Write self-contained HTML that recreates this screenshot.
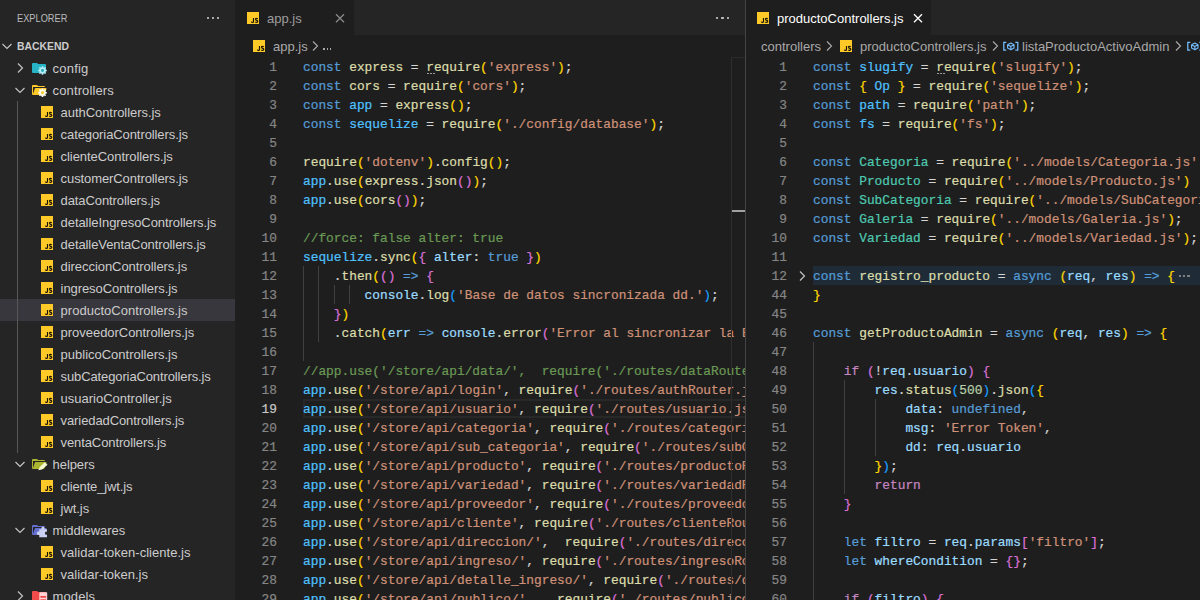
<!DOCTYPE html>
<html><head><meta charset="utf-8"><title>VS Code</title><style>
*{box-sizing:border-box;margin:0;padding:0}
html,body{width:1200px;height:600px;overflow:hidden;background:#1e1e1e}
body{font-family:"Liberation Sans",sans-serif;font-size:13px;color:#cccccc;position:relative}
.abs{position:absolute}
#side{position:absolute;left:0;top:0;width:237px;height:600px;background:#252526;overflow:hidden}
#side .hdr{position:absolute;left:17px;top:11px;font-size:11px;color:#bbbbbb;line-height:14px;transform:scaleX(0.84);transform-origin:0 0}
#side .sec{position:absolute;left:17px;top:39px;font-size:11px;font-weight:bold;color:#cccccc;line-height:14px;transform:scaleX(0.945);transform-origin:0 0}
.dots{position:absolute;width:14px;height:4px}
.dots i{position:absolute;top:-0.2px;width:2.400px;height:2.400px;background:#c5c5c5;border-radius:0.800px}
.row{position:absolute;left:0;width:235px;height:22px}
.row.sel{background:#37373d}
.row .lbl{position:absolute;top:1px;line-height:22px;font-size:13px;color:#cccccc;white-space:nowrap}
.jsi{position:absolute}
.guide{position:absolute;width:1px;background:#585858}
.pane{position:absolute;top:0;height:600px;overflow:hidden;background:#1e1e1e}
.tabs{position:absolute;left:0;top:0;right:0;height:35px;background:#252526}
.tab{position:absolute;left:0;top:0;height:35px;background:#1e1e1e}
.tab .tl{position:absolute;top:1px;line-height:35px;font-size:13px;white-space:nowrap}
.bc{position:absolute;left:0;top:35px;right:0;height:22px;background:#1e1e1e;font-size:13px;color:#a9a9a9}
.bc span{position:absolute;top:1px;line-height:22px;white-space:nowrap}
.code{position:absolute;left:0;top:57px;right:0;bottom:0;font-family:"Liberation Mono",monospace;font-size:12.83px;color:#d4d4d4;-webkit-text-stroke:0.22px}
.ln{position:absolute;left:0;width:42px;text-align:right;line-height:21px;height:19px;color:#858585;white-space:pre}
.ln.cur{color:#c6c6c6}
.cl{position:absolute;left:68px;line-height:21px;height:19px;white-space:pre}
.cl.fold{background:rgba(38,79,120,0.3);width:1000px}
.ck{color:#569cd6}.cc{color:#4fc1ff}.cf{color:#dcdcaa}.cv{color:#9cdcfe}.cs{color:#ce9178}
.ct{color:#4ec9b0}.cm{color:#6a9955}.cp{color:#c586c0}.cn{color:#b5cea8}
.c1{color:#ffd700}.c2{color:#da70d6}.c3{color:#179fff}.cg{color:#808080}
.ig{position:absolute;width:1px;background:#404040}
.ig.act{background:#707070}
</style></head><body>
<div id="side">
<div class="hdr">EXPLORER</div>
<div class="dots" style="left:206.5px;top:17px"><i style="left:0;background:#c5c5c5"></i><i style="left:5.300px;background:#c5c5c5"></i><i style="left:10.600px;background:#c5c5c5"></i></div>
<svg class="abs" style="left:-1px;top:38px" width="16" height="16" viewBox="0 0 16 16"><path d="M3.5 6 L8 10.5 L12.5 6" fill="none" stroke="#c5c5c5" stroke-width="1.15"/></svg>
<div class="sec">BACKEND</div>
<div class="row" style="top:57px">
<svg class="abs" style="left:12px;top:3px" width="16" height="16" viewBox="0 0 16 16"><path d="M6 3.5 L10.5 8 L6 12.5" fill="none" stroke="#c5c5c5" stroke-width="1.15"/></svg>
<svg class="abs" style="left:31px;top:3px;overflow:visible" width="16" height="16" viewBox="0 0 32 32"><path d="M13.844 7.536l-1.288-1.072A2 2 0 0 0 11.276 6H4a2 2 0 0 0-2 2v16a2 2 0 0 0 2 2h24a2 2 0 0 0 2-2V10a2 2 0 0 0-2-2H15.124a2 2 0 0 1-1.280-.464z" fill="#26b4c6"/><path d="M31.64 19.35L31.64 22.65L29.50 22.56L28.70 24.49L30.28 25.95L27.95 28.28L26.49 26.70L24.56 27.50L24.65 29.64L21.35 29.64L21.44 27.50L19.51 26.70L18.05 28.28L15.72 25.95L17.30 24.49L16.50 22.56L14.36 22.65L14.36 19.35L16.50 19.44L17.30 17.51L15.72 16.05L18.05 13.72L19.51 15.30L21.44 14.50L21.35 12.36L24.65 12.36L24.56 14.50L26.49 15.30L27.95 13.72L30.28 16.05L28.70 17.51L29.50 19.44z" fill="#b5ebf5"/><circle cx="23" cy="21" r="2.904" fill="#20a9bb"/></svg>
<span class="lbl" style="left:52.6px;letter-spacing:0.201px">config</span>
</div>
<div class="row" style="top:79px">
<svg class="abs" style="left:12px;top:3px" width="16" height="16" viewBox="0 0 16 16"><path d="M3.5 6 L8 10.5 L12.5 6" fill="none" stroke="#c5c5c5" stroke-width="1.15"/></svg>
<svg class="abs" style="left:31px;top:3px;overflow:visible" width="16" height="16" viewBox="0 0 32 32"><path d="M28.967 12H9.442a2 2 0 0 0-1.898 1.368L4 24V10h24a2 2 0 0 0-2-2H15.124a2 2 0 0 1-1.280-.464l-1.288-1.072A2 2 0 0 0 11.276 6H4a2 2 0 0 0-2 2v16a2 2 0 0 0 2 2h22l4.805-11.212A2 2 0 0 0 28.967 12z" fill="#ffca28"/><path d="M31.64 19.75L31.64 23.05L29.50 22.96L28.70 24.89L30.28 26.35L27.95 28.68L26.49 27.10L24.56 27.90L24.65 30.04L21.35 30.04L21.44 27.90L19.51 27.10L18.05 28.68L15.72 26.35L17.30 24.89L16.50 22.96L14.36 23.05L14.36 19.75L16.50 19.84L17.30 17.91L15.72 16.45L18.05 14.12L19.51 15.70L21.44 14.90L21.35 12.76L24.65 12.76L24.56 14.90L26.49 15.70L27.95 14.12L30.28 16.45L28.70 17.91L29.50 19.84z" fill="#fffdf0"/><circle cx="23" cy="21.4" r="2.904" fill="#ffc61a"/></svg>
<span class="lbl" style="left:52.6px;letter-spacing:0.124px">controllers</span>
</div>
<div class="row" style="top:101px">
<svg class="jsi" style="left:41px;top:5px" width="12" height="12" viewBox="0 0 12 12"><rect width="12" height="12" fill="#ffca28"/><path d="M6.500 6.100V9.400Q6.500 10.400 5.500 10.400Q4.600 10.400 4.300 9.600M10.800 6.900Q10.200 6.400 9.500 6.400Q8.500 6.400 8.500 7.300Q8.500 8.100 9.600 8.400Q10.800 8.700 10.800 9.500Q10.800 10.400 9.600 10.400Q8.700 10.400 8.200 9.800" fill="none" stroke="#1a1500" stroke-width="1.150"/></svg>
<span class="lbl" style="left:60.6px;letter-spacing:-0.056px">authControllers.js</span>
</div>
<div class="row" style="top:123px">
<svg class="jsi" style="left:41px;top:5px" width="12" height="12" viewBox="0 0 12 12"><rect width="12" height="12" fill="#ffca28"/><path d="M6.500 6.100V9.400Q6.500 10.400 5.500 10.400Q4.600 10.400 4.300 9.600M10.800 6.900Q10.200 6.400 9.500 6.400Q8.500 6.400 8.500 7.300Q8.500 8.100 9.600 8.400Q10.800 8.700 10.800 9.500Q10.800 10.400 9.600 10.400Q8.700 10.400 8.200 9.800" fill="none" stroke="#1a1500" stroke-width="1.150"/></svg>
<span class="lbl" style="left:60.6px;letter-spacing:-0.088px">categoriaControllers.js</span>
</div>
<div class="row" style="top:145px">
<svg class="jsi" style="left:41px;top:5px" width="12" height="12" viewBox="0 0 12 12"><rect width="12" height="12" fill="#ffca28"/><path d="M6.500 6.100V9.400Q6.500 10.400 5.500 10.400Q4.600 10.400 4.300 9.600M10.800 6.900Q10.200 6.400 9.500 6.400Q8.500 6.400 8.500 7.300Q8.500 8.100 9.600 8.400Q10.800 8.700 10.800 9.500Q10.800 10.400 9.600 10.400Q8.700 10.400 8.200 9.800" fill="none" stroke="#1a1500" stroke-width="1.150"/></svg>
<span class="lbl" style="left:60.6px;letter-spacing:-0.062px">clienteControllers.js</span>
</div>
<div class="row" style="top:167px">
<svg class="jsi" style="left:41px;top:5px" width="12" height="12" viewBox="0 0 12 12"><rect width="12" height="12" fill="#ffca28"/><path d="M6.500 6.100V9.400Q6.500 10.400 5.500 10.400Q4.600 10.400 4.300 9.600M10.800 6.900Q10.200 6.400 9.500 6.400Q8.500 6.400 8.500 7.300Q8.500 8.100 9.600 8.400Q10.800 8.700 10.800 9.500Q10.800 10.400 9.600 10.400Q8.700 10.400 8.200 9.800" fill="none" stroke="#1a1500" stroke-width="1.150"/></svg>
<span class="lbl" style="left:60.6px;letter-spacing:-0.092px">customerControllers.js</span>
</div>
<div class="row" style="top:189px">
<svg class="jsi" style="left:41px;top:5px" width="12" height="12" viewBox="0 0 12 12"><rect width="12" height="12" fill="#ffca28"/><path d="M6.500 6.100V9.400Q6.500 10.400 5.500 10.400Q4.600 10.400 4.300 9.600M10.800 6.900Q10.200 6.400 9.500 6.400Q8.500 6.400 8.500 7.300Q8.500 8.100 9.600 8.400Q10.800 8.700 10.800 9.500Q10.800 10.400 9.600 10.400Q8.700 10.400 8.200 9.800" fill="none" stroke="#1a1500" stroke-width="1.150"/></svg>
<span class="lbl" style="left:60.6px;letter-spacing:-0.103px">dataControllers.js</span>
</div>
<div class="row" style="top:211px">
<svg class="jsi" style="left:41px;top:5px" width="12" height="12" viewBox="0 0 12 12"><rect width="12" height="12" fill="#ffca28"/><path d="M6.500 6.100V9.400Q6.500 10.400 5.500 10.400Q4.600 10.400 4.300 9.600M10.800 6.900Q10.200 6.400 9.500 6.400Q8.500 6.400 8.500 7.300Q8.500 8.100 9.600 8.400Q10.800 8.700 10.800 9.500Q10.800 10.400 9.600 10.400Q8.700 10.400 8.200 9.800" fill="none" stroke="#1a1500" stroke-width="1.150"/></svg>
<span class="lbl" style="left:60.6px;letter-spacing:-0.068px">detalleIngresoControllers.js</span>
</div>
<div class="row" style="top:233px">
<svg class="jsi" style="left:41px;top:5px" width="12" height="12" viewBox="0 0 12 12"><rect width="12" height="12" fill="#ffca28"/><path d="M6.500 6.100V9.400Q6.500 10.400 5.500 10.400Q4.600 10.400 4.300 9.600M10.800 6.900Q10.200 6.400 9.500 6.400Q8.500 6.400 8.500 7.300Q8.500 8.100 9.600 8.400Q10.800 8.700 10.800 9.500Q10.800 10.400 9.600 10.400Q8.700 10.400 8.200 9.800" fill="none" stroke="#1a1500" stroke-width="1.150"/></svg>
<span class="lbl" style="left:60.6px;letter-spacing:-0.089px">detalleVentaControllers.js</span>
</div>
<div class="row" style="top:255px">
<svg class="jsi" style="left:41px;top:5px" width="12" height="12" viewBox="0 0 12 12"><rect width="12" height="12" fill="#ffca28"/><path d="M6.500 6.100V9.400Q6.500 10.400 5.500 10.400Q4.600 10.400 4.300 9.600M10.800 6.900Q10.200 6.400 9.500 6.400Q8.500 6.400 8.500 7.300Q8.500 8.100 9.600 8.400Q10.800 8.700 10.800 9.500Q10.800 10.400 9.600 10.400Q8.700 10.400 8.200 9.800" fill="none" stroke="#1a1500" stroke-width="1.150"/></svg>
<span class="lbl" style="left:60.6px;letter-spacing:-0.058px">direccionControllers.js</span>
</div>
<div class="row" style="top:277px">
<svg class="jsi" style="left:41px;top:5px" width="12" height="12" viewBox="0 0 12 12"><rect width="12" height="12" fill="#ffca28"/><path d="M6.500 6.100V9.400Q6.500 10.400 5.500 10.400Q4.600 10.400 4.300 9.600M10.800 6.900Q10.200 6.400 9.500 6.400Q8.500 6.400 8.500 7.300Q8.500 8.100 9.600 8.400Q10.800 8.700 10.800 9.500Q10.800 10.400 9.600 10.400Q8.700 10.400 8.200 9.800" fill="none" stroke="#1a1500" stroke-width="1.150"/></svg>
<span class="lbl" style="left:60.6px;letter-spacing:-0.08px">ingresoControllers.js</span>
</div>
<div class="row sel" style="top:299px">
<svg class="jsi" style="left:41px;top:5px" width="12" height="12" viewBox="0 0 12 12"><rect width="12" height="12" fill="#ffca28"/><path d="M6.500 6.100V9.400Q6.500 10.400 5.500 10.400Q4.600 10.400 4.300 9.600M10.800 6.900Q10.200 6.400 9.500 6.400Q8.500 6.400 8.500 7.300Q8.500 8.100 9.600 8.400Q10.800 8.700 10.800 9.500Q10.800 10.400 9.600 10.400Q8.700 10.400 8.200 9.800" fill="none" stroke="#1a1500" stroke-width="1.150"/></svg>
<span class="lbl" style="left:60.6px;letter-spacing:0.022px">productoControllers.js</span>
</div>
<div class="row" style="top:321px">
<svg class="jsi" style="left:41px;top:5px" width="12" height="12" viewBox="0 0 12 12"><rect width="12" height="12" fill="#ffca28"/><path d="M6.500 6.100V9.400Q6.500 10.400 5.500 10.400Q4.600 10.400 4.300 9.600M10.800 6.900Q10.200 6.400 9.500 6.400Q8.500 6.400 8.500 7.300Q8.500 8.100 9.600 8.400Q10.800 8.700 10.800 9.500Q10.800 10.400 9.600 10.400Q8.700 10.400 8.200 9.800" fill="none" stroke="#1a1500" stroke-width="1.150"/></svg>
<span class="lbl" style="left:60.6px;letter-spacing:-0.036px">proveedorControllers.js</span>
</div>
<div class="row" style="top:343px">
<svg class="jsi" style="left:41px;top:5px" width="12" height="12" viewBox="0 0 12 12"><rect width="12" height="12" fill="#ffca28"/><path d="M6.500 6.100V9.400Q6.500 10.400 5.500 10.400Q4.600 10.400 4.300 9.600M10.800 6.900Q10.200 6.400 9.500 6.400Q8.500 6.400 8.500 7.300Q8.500 8.100 9.600 8.400Q10.800 8.700 10.800 9.500Q10.800 10.400 9.600 10.400Q8.700 10.400 8.200 9.800" fill="none" stroke="#1a1500" stroke-width="1.150"/></svg>
<span class="lbl" style="left:60.6px;letter-spacing:-0.008px">publicoControllers.js</span>
</div>
<div class="row" style="top:365px">
<svg class="jsi" style="left:41px;top:5px" width="12" height="12" viewBox="0 0 12 12"><rect width="12" height="12" fill="#ffca28"/><path d="M6.500 6.100V9.400Q6.500 10.400 5.500 10.400Q4.600 10.400 4.300 9.600M10.800 6.900Q10.200 6.400 9.500 6.400Q8.500 6.400 8.500 7.300Q8.500 8.100 9.600 8.400Q10.800 8.700 10.800 9.500Q10.800 10.400 9.600 10.400Q8.700 10.400 8.200 9.800" fill="none" stroke="#1a1500" stroke-width="1.150"/></svg>
<span class="lbl" style="left:60.6px;letter-spacing:-0.119px">subCategoriaControllers.js</span>
</div>
<div class="row" style="top:387px">
<svg class="jsi" style="left:41px;top:5px" width="12" height="12" viewBox="0 0 12 12"><rect width="12" height="12" fill="#ffca28"/><path d="M6.500 6.100V9.400Q6.500 10.400 5.500 10.400Q4.600 10.400 4.300 9.600M10.800 6.900Q10.200 6.400 9.500 6.400Q8.500 6.400 8.500 7.300Q8.500 8.100 9.600 8.400Q10.800 8.700 10.800 9.500Q10.800 10.400 9.600 10.400Q8.700 10.400 8.200 9.800" fill="none" stroke="#1a1500" stroke-width="1.150"/></svg>
<span class="lbl" style="left:60.6px;letter-spacing:-0.009px">usuarioController.js</span>
</div>
<div class="row" style="top:409px">
<svg class="jsi" style="left:41px;top:5px" width="12" height="12" viewBox="0 0 12 12"><rect width="12" height="12" fill="#ffca28"/><path d="M6.500 6.100V9.400Q6.500 10.400 5.500 10.400Q4.600 10.400 4.300 9.600M10.800 6.900Q10.200 6.400 9.500 6.400Q8.500 6.400 8.500 7.300Q8.500 8.100 9.600 8.400Q10.800 8.700 10.800 9.500Q10.800 10.400 9.600 10.400Q8.700 10.400 8.200 9.800" fill="none" stroke="#1a1500" stroke-width="1.150"/></svg>
<span class="lbl" style="left:60.6px;letter-spacing:-0.101px">variedadControllers.js</span>
</div>
<div class="row" style="top:431px">
<svg class="jsi" style="left:41px;top:5px" width="12" height="12" viewBox="0 0 12 12"><rect width="12" height="12" fill="#ffca28"/><path d="M6.500 6.100V9.400Q6.500 10.400 5.500 10.400Q4.600 10.400 4.300 9.600M10.800 6.900Q10.200 6.400 9.500 6.400Q8.500 6.400 8.500 7.300Q8.500 8.100 9.600 8.400Q10.800 8.700 10.800 9.500Q10.800 10.400 9.600 10.400Q8.700 10.400 8.200 9.800" fill="none" stroke="#1a1500" stroke-width="1.150"/></svg>
<span class="lbl" style="left:60.6px;letter-spacing:-0.108px">ventaControllers.js</span>
</div>
<div class="row" style="top:453px">
<svg class="abs" style="left:12px;top:3px" width="16" height="16" viewBox="0 0 16 16"><path d="M3.5 6 L8 10.5 L12.5 6" fill="none" stroke="#c5c5c5" stroke-width="1.15"/></svg>
<svg class="abs" style="left:31px;top:3px;overflow:visible" width="16" height="16" viewBox="0 0 32 32"><path d="M28.967 12H9.442a2 2 0 0 0-1.898 1.368L4 24V10h24a2 2 0 0 0-2-2H15.124a2 2 0 0 1-1.280-.464l-1.288-1.072A2 2 0 0 0 11.276 6H4a2 2 0 0 0-2 2v16a2 2 0 0 0 2 2h22l4.805-11.212A2 2 0 0 0 28.967 12z" fill="#aab530"/><path d="M14.500 28.500L17.500 22L27.500 12.500L33 17.500L22 27z" fill="#f4f8d0"/></svg>
<span class="lbl" style="left:52.6px;letter-spacing:-0.089px">helpers</span>
</div>
<div class="row" style="top:475px">
<svg class="jsi" style="left:41px;top:5px" width="12" height="12" viewBox="0 0 12 12"><rect width="12" height="12" fill="#ffca28"/><path d="M6.500 6.100V9.400Q6.500 10.400 5.500 10.400Q4.600 10.400 4.300 9.600M10.800 6.900Q10.200 6.400 9.500 6.400Q8.500 6.400 8.500 7.300Q8.500 8.100 9.600 8.400Q10.800 8.700 10.800 9.500Q10.800 10.400 9.600 10.400Q8.700 10.400 8.200 9.800" fill="none" stroke="#1a1500" stroke-width="1.150"/></svg>
<span class="lbl" style="left:60.6px;letter-spacing:-0.138px">cliente_jwt.js</span>
</div>
<div class="row" style="top:497px">
<svg class="jsi" style="left:41px;top:5px" width="12" height="12" viewBox="0 0 12 12"><rect width="12" height="12" fill="#ffca28"/><path d="M6.500 6.100V9.400Q6.500 10.400 5.500 10.400Q4.600 10.400 4.300 9.600M10.800 6.900Q10.200 6.400 9.500 6.400Q8.500 6.400 8.500 7.300Q8.500 8.100 9.600 8.400Q10.800 8.700 10.800 9.500Q10.800 10.400 9.600 10.400Q8.700 10.400 8.200 9.800" fill="none" stroke="#1a1500" stroke-width="1.150"/></svg>
<span class="lbl" style="left:60.6px;letter-spacing:-0.057px">jwt.js</span>
</div>
<div class="row" style="top:519px">
<svg class="abs" style="left:12px;top:3px" width="16" height="16" viewBox="0 0 16 16"><path d="M3.5 6 L8 10.5 L12.5 6" fill="none" stroke="#c5c5c5" stroke-width="1.15"/></svg>
<svg class="abs" style="left:31px;top:3px;overflow:visible" width="16" height="16" viewBox="0 0 32 32"><path d="M28.967 12H9.442a2 2 0 0 0-1.898 1.368L4 24V10h24a2 2 0 0 0-2-2H15.124a2 2 0 0 1-1.280-.464l-1.288-1.072A2 2 0 0 0 11.276 6H4a2 2 0 0 0-2 2v16a2 2 0 0 0 2 2h22l4.805-11.212A2 2 0 0 0 28.967 12z" fill="#6470cf"/><path d="M16.500 14.500h4.700a3.300 3.300 0 1 1 5.600 0h5.200v5a3 3 0 1 0 0 5.600v5.400H16.500v-5.200a3.300 3.300 0 1 1 0-5.600z" fill="#ccd0f0"/></svg>
<span class="lbl" style="left:52.6px;letter-spacing:-0.028px">middlewares</span>
</div>
<div class="row" style="top:541px">
<svg class="jsi" style="left:41px;top:5px" width="12" height="12" viewBox="0 0 12 12"><rect width="12" height="12" fill="#ffca28"/><path d="M6.500 6.100V9.400Q6.500 10.400 5.500 10.400Q4.600 10.400 4.300 9.600M10.800 6.900Q10.200 6.400 9.500 6.400Q8.500 6.400 8.500 7.300Q8.500 8.100 9.600 8.400Q10.800 8.700 10.800 9.500Q10.800 10.400 9.600 10.400Q8.700 10.400 8.200 9.800" fill="none" stroke="#1a1500" stroke-width="1.150"/></svg>
<span class="lbl" style="left:60.6px;letter-spacing:0.024px">validar-token-cliente.js</span>
</div>
<div class="row" style="top:563px">
<svg class="jsi" style="left:41px;top:5px" width="12" height="12" viewBox="0 0 12 12"><rect width="12" height="12" fill="#ffca28"/><path d="M6.500 6.100V9.400Q6.500 10.400 5.500 10.400Q4.600 10.400 4.300 9.600M10.800 6.900Q10.200 6.400 9.500 6.400Q8.500 6.400 8.500 7.300Q8.500 8.100 9.600 8.400Q10.800 8.700 10.800 9.500Q10.800 10.400 9.600 10.400Q8.700 10.400 8.200 9.800" fill="none" stroke="#1a1500" stroke-width="1.150"/></svg>
<span class="lbl" style="left:60.6px;letter-spacing:-0.002px">validar-token.js</span>
</div>
<div class="row" style="top:585px">
<svg class="abs" style="left:12px;top:3px" width="16" height="16" viewBox="0 0 16 16"><path d="M6 3.5 L10.5 8 L6 12.5" fill="none" stroke="#c5c5c5" stroke-width="1.15"/></svg>
<svg class="abs" style="left:31px;top:3px;overflow:visible" width="16" height="16" viewBox="0 0 32 32"><path d="M13.844 7.536l-1.288-1.072A2 2 0 0 0 11.276 6H4a2 2 0 0 0-2 2v16a2 2 0 0 0 2 2h24a2 2 0 0 0 2-2V10a2 2 0 0 0-2-2H15.124a2 2 0 0 1-1.280-.464z" fill="#f24c4a"/><rect x="16.600" y="8.600" width="15.800" height="22" rx="1.500" fill="#ffd3d6"/><rect x="18.800" y="16" width="11.400" height="3.400" fill="#ef4444"/><rect x="18.800" y="22.600" width="11.400" height="3.400" fill="#ef4444"/></svg>
<span class="lbl" style="left:52.6px;letter-spacing:0.097px">models</span>
</div>
<div class="guide" style="left:17px;top:101px;height:352px"></div>
</div>
<div class="pane" id="p1" style="left:235px;width:510px">
<div class="tabs"><div class="tab" style="width:119px">
<svg class="jsi" style="left:12px;top:12px" width="12" height="12" viewBox="0 0 12 12"><rect width="12" height="12" fill="#ffca28"/><path d="M6.500 6.100V9.400Q6.500 10.400 5.500 10.400Q4.600 10.400 4.300 9.600M10.800 6.900Q10.200 6.400 9.500 6.400Q8.500 6.400 8.500 7.300Q8.500 8.100 9.600 8.400Q10.800 8.700 10.800 9.500Q10.800 10.400 9.600 10.400Q8.700 10.400 8.200 9.800" fill="none" stroke="#1a1500" stroke-width="1.150"/></svg>
<span class="tl" style="left:32px;color:#9d9d9d">app.js</span>
<svg class="abs" style="left:97px;top:10px" width="16" height="16" viewBox="0 0 16 16"><path d="M4 4.300l8 8M12 4.300l-8 8" stroke="#8a8a8a" stroke-width="1.300" fill="none"/></svg>
</div>
<div class="dots" style="left:481px;top:17px"><i style="left:0;background:#c5c5c5"></i><i style="left:5.300px;background:#c5c5c5"></i><i style="left:10.600px;background:#c5c5c5"></i></div>
</div>
<div class="bc">
<svg class="jsi" style="left:18px;top:5px" width="12" height="12" viewBox="0 0 12 12"><rect width="12" height="12" fill="#ffca28"/><path d="M6.500 6.100V9.400Q6.500 10.400 5.500 10.400Q4.600 10.400 4.300 9.600M10.800 6.900Q10.200 6.400 9.500 6.400Q8.500 6.400 8.500 7.300Q8.500 8.100 9.600 8.400Q10.800 8.700 10.800 9.500Q10.800 10.400 9.600 10.400Q8.700 10.400 8.200 9.800" fill="none" stroke="#1a1500" stroke-width="1.150"/></svg>
<span style="left:38px">app.js</span>
<svg class="abs" style="left:72px;top:3px" width="16" height="16" viewBox="0 0 16 16"><path d="M6 3.5 L10.5 8 L6 12.5" fill="none" stroke="#a9a9a9" stroke-width="1.15"/></svg>
<div class="abs" style="left:88.2px;top:13.400px;width:1.700px;height:1.700px;background:#a9a9a9"></div>
<div class="abs" style="left:91.5px;top:13.400px;width:1.700px;height:1.700px;background:#a9a9a9"></div>
<div class="abs" style="left:94.8px;top:13.400px;width:1.700px;height:1.700px;background:#a9a9a9"></div>
</div>
<div class="code">
<div class="abs" style="left:68px;top:342px;width:442px;height:19px;border:2px solid #282828;border-right:0"></div>
<div class="ig" style="left:68px;top:209px;height:95px"></div>
<div class="ig" style="left:83px;top:209px;height:76px"></div>
<div class="ig" style="left:99px;top:228px;height:19px"></div>
<div class="ig" style="left:114px;top:228px;height:19px"></div>
<div class="ln" style="top:0px">1</div>
<div class="cl" style="top:0px"><span class="ck">const</span> <span class="cf">express</span> = <span class="cf">require</span><span class="c1">(</span><span class="cs">'express'</span><span class="c1">)</span>;</div>
<div class="ln" style="top:19px">2</div>
<div class="cl" style="top:19px"><span class="ck">const</span> <span class="cf">cors</span> = <span class="cf">require</span><span class="c1">(</span><span class="cs">'cors'</span><span class="c1">)</span>;</div>
<div class="ln" style="top:38px">3</div>
<div class="cl" style="top:38px"><span class="ck">const</span> <span class="cc">app</span> = <span class="cf">express</span><span class="c1">()</span>;</div>
<div class="ln" style="top:57px">4</div>
<div class="cl" style="top:57px"><span class="ck">const</span> <span class="cc">sequelize</span> = <span class="cf">require</span><span class="c1">(</span><span class="cs">'./config/database'</span><span class="c1">)</span>;</div>
<div class="ln" style="top:76px">5</div>
<div class="cl" style="top:76px"></div>
<div class="ln" style="top:95px">6</div>
<div class="cl" style="top:95px"><span class="cf">require</span><span class="c1">(</span><span class="cs">'dotenv'</span><span class="c1">)</span>.<span class="cf">config</span><span class="c1">()</span>;</div>
<div class="ln" style="top:114px">7</div>
<div class="cl" style="top:114px"><span class="cc">app</span>.<span class="cf">use</span><span class="c1">(</span><span class="cf">express</span>.<span class="cf">json</span><span class="c2">()</span><span class="c1">)</span>;</div>
<div class="ln" style="top:133px">8</div>
<div class="cl" style="top:133px"><span class="cc">app</span>.<span class="cf">use</span><span class="c1">(</span><span class="cf">cors</span><span class="c2">()</span><span class="c1">)</span>;</div>
<div class="ln" style="top:152px">9</div>
<div class="cl" style="top:152px"></div>
<div class="ln" style="top:171px">10</div>
<div class="cl" style="top:171px"><span class="cm">//force: false alter: true</span></div>
<div class="ln" style="top:190px">11</div>
<div class="cl" style="top:190px"><span class="cc">sequelize</span>.<span class="cf">sync</span><span class="c1">(</span><span class="c2">{</span> <span class="cv">alter</span>: <span class="ck">true</span> <span class="c2">}</span><span class="c1">)</span></div>
<div class="ln" style="top:209px">12</div>
<div class="cl" style="top:209px">    .<span class="cf">then</span><span class="c1">(</span><span class="c2">()</span> <span class="ck">=&gt;</span> <span class="c2">{</span></div>
<div class="ln" style="top:228px">13</div>
<div class="cl" style="top:228px">        <span class="cv">console</span>.<span class="cf">log</span><span class="c3">(</span><span class="cs">'Base de datos sincronizada dd.'</span><span class="c3">)</span>;</div>
<div class="ln" style="top:247px">14</div>
<div class="cl" style="top:247px">    <span class="c2">}</span><span class="c1">)</span></div>
<div class="ln" style="top:266px">15</div>
<div class="cl" style="top:266px">    .<span class="cf">catch</span><span class="c1">(</span><span class="cv">err</span> <span class="ck">=&gt;</span> <span class="cv">console</span>.<span class="cf">error</span><span class="c2">(</span><span class="cs">'Error al sincronizar la Base de datos:'</span>,</div>
<div class="ln" style="top:285px">16</div>
<div class="cl" style="top:285px"></div>
<div class="ln" style="top:304px">17</div>
<div class="cl" style="top:304px"><span class="cm">//app.use('/store/api/data/',  require('./routes/dataRouter.js'));</span></div>
<div class="ln" style="top:323px">18</div>
<div class="cl" style="top:323px"><span class="cc">app</span>.<span class="cf">use</span><span class="c1">(</span><span class="cs">'/store/api/login'</span>, <span class="cf">require</span><span class="c2">(</span><span class="cs">'./routes/authRouter.js'</span><span class="c2">)</span><span class="c1">)</span>;</div>
<div class="ln cur" style="top:342px">19</div>
<div class="cl" style="top:342px"><span class="cc">app</span>.<span class="cf">use</span><span class="c1">(</span><span class="cs">'/store/api/usuario'</span>, <span class="cf">require</span><span class="c2">(</span><span class="cs">'./routes/usuario.js'</span><span class="c2">)</span><span class="c1">)</span>;</div>
<div class="ln" style="top:361px">20</div>
<div class="cl" style="top:361px"><span class="cc">app</span>.<span class="cf">use</span><span class="c1">(</span><span class="cs">'/store/api/categoria'</span>, <span class="cf">require</span><span class="c2">(</span><span class="cs">'./routes/categoria.js'</span><span class="c2">)</span><span class="c1">)</span>;</div>
<div class="ln" style="top:380px">21</div>
<div class="cl" style="top:380px"><span class="cc">app</span>.<span class="cf">use</span><span class="c1">(</span><span class="cs">'/store/api/sub_categoria'</span>, <span class="cf">require</span><span class="c2">(</span><span class="cs">'./routes/subCategoria.js'</span><span class="c2">)</span><span class="c1">)</span>;</div>
<div class="ln" style="top:399px">22</div>
<div class="cl" style="top:399px"><span class="cc">app</span>.<span class="cf">use</span><span class="c1">(</span><span class="cs">'/store/api/producto'</span>, <span class="cf">require</span><span class="c2">(</span><span class="cs">'./routes/productoRouter.js'</span><span class="c2">)</span><span class="c1">)</span>;</div>
<div class="ln" style="top:418px">23</div>
<div class="cl" style="top:418px"><span class="cc">app</span>.<span class="cf">use</span><span class="c1">(</span><span class="cs">'/store/api/variedad'</span>, <span class="cf">require</span><span class="c2">(</span><span class="cs">'./routes/variedadRouter.js'</span><span class="c2">)</span><span class="c1">)</span>;</div>
<div class="ln" style="top:437px">24</div>
<div class="cl" style="top:437px"><span class="cc">app</span>.<span class="cf">use</span><span class="c1">(</span><span class="cs">'/store/api/proveedor'</span>, <span class="cf">require</span><span class="c2">(</span><span class="cs">'./routes/proveedorRouter.js'</span><span class="c2">)</span><span class="c1">)</span>;</div>
<div class="ln" style="top:456px">25</div>
<div class="cl" style="top:456px"><span class="cc">app</span>.<span class="cf">use</span><span class="c1">(</span><span class="cs">'/store/api/cliente'</span>, <span class="cf">require</span><span class="c2">(</span><span class="cs">'./routes/clienteRouter.js'</span><span class="c2">)</span><span class="c1">)</span>;</div>
<div class="ln" style="top:475px">26</div>
<div class="cl" style="top:475px"><span class="cc">app</span>.<span class="cf">use</span><span class="c1">(</span><span class="cs">'/store/api/direccion/'</span>,  <span class="cf">require</span><span class="c2">(</span><span class="cs">'./routes/direccionRouter.js'</span><span class="c2">)</span><span class="c1">)</span>;</div>
<div class="ln" style="top:494px">27</div>
<div class="cl" style="top:494px"><span class="cc">app</span>.<span class="cf">use</span><span class="c1">(</span><span class="cs">'/store/api/ingreso/'</span>, <span class="cf">require</span><span class="c2">(</span><span class="cs">'./routes/ingresoRouter.js'</span><span class="c2">)</span><span class="c1">)</span>;</div>
<div class="ln" style="top:513px">28</div>
<div class="cl" style="top:513px"><span class="cc">app</span>.<span class="cf">use</span><span class="c1">(</span><span class="cs">'/store/api/detalle_ingreso/'</span>, <span class="cf">require</span><span class="c2">(</span><span class="cs">'./routes/detalleIngreso.js'</span><span class="c2">)</span><span class="c1">)</span>;</div>
<div class="ln" style="top:532px">29</div>
<div class="cl" style="top:532px"><span class="cc">app</span>.<span class="cf">use</span><span class="c1">(</span><span class="cs">'/store/api/publico/'</span>,   <span class="cf">require</span><span class="c2">(</span><span class="cs">'./routes/publicoRouter.js'</span><span class="c2">)</span><span class="c1">)</span>;</div>
<div class="abs" style="left:192px;top:16px;width:1.500px;height:1.400px;background:#999999"></div>
<div class="abs" style="left:195px;top:16px;width:1.500px;height:1.400px;background:#999999"></div>
<div class="abs" style="left:198px;top:16px;width:1.500px;height:1.400px;background:#999999"></div>
</div>
<div class="abs" style="left:496px;top:57px;width:14px;height:543px;border-left:1px solid #2e2e2e;border-top:1px solid #2a2a2a"></div>
<div class="abs" style="left:497px;top:210px;width:13px;height:2px;background:#a0a0a0"></div>
</div>
<div class="pane" id="p2" style="left:745px;width:455px;border-left:1px solid #444444">
<div class="tabs"><div class="tab" style="width:185px">
<svg class="jsi" style="left:11px;top:12px" width="12" height="12" viewBox="0 0 12 12"><rect width="12" height="12" fill="#ffca28"/><path d="M6.500 6.100V9.400Q6.500 10.400 5.500 10.400Q4.600 10.400 4.300 9.600M10.800 6.900Q10.200 6.400 9.500 6.400Q8.500 6.400 8.500 7.300Q8.500 8.100 9.600 8.400Q10.800 8.700 10.800 9.500Q10.800 10.400 9.600 10.400Q8.700 10.400 8.200 9.800" fill="none" stroke="#1a1500" stroke-width="1.150"/></svg>
<span class="tl" style="left:31px;color:#ffffff">productoControllers.js</span>
<svg class="abs" style="left:164px;top:10px" width="16" height="16" viewBox="0 0 16 16"><path d="M4 4.300l8 8M12 4.300l-8 8" stroke="#ffffff" stroke-width="1.300" fill="none"/></svg>
</div></div>
<div class="bc">
<span style="left:15px">controllers</span>
<svg class="abs" style="left:75px;top:3px" width="16" height="16" viewBox="0 0 16 16"><path d="M6 3.5 L10.5 8 L6 12.5" fill="none" stroke="#a9a9a9" stroke-width="1.15"/></svg>
<svg class="jsi" style="left:94px;top:5px" width="12" height="12" viewBox="0 0 12 12"><rect width="12" height="12" fill="#ffca28"/><path d="M6.500 6.100V9.400Q6.500 10.400 5.500 10.400Q4.600 10.400 4.300 9.600M10.800 6.900Q10.200 6.400 9.500 6.400Q8.500 6.400 8.500 7.300Q8.500 8.100 9.600 8.400Q10.800 8.700 10.800 9.500Q10.800 10.400 9.600 10.400Q8.700 10.400 8.200 9.800" fill="none" stroke="#1a1500" stroke-width="1.150"/></svg>
<span style="left:114px">productoControllers.js</span>
<svg class="abs" style="left:241px;top:3px" width="16" height="16" viewBox="0 0 16 16"><path d="M6 3.5 L10.5 8 L6 12.5" fill="none" stroke="#a9a9a9" stroke-width="1.15"/></svg>
<svg class="abs" style="left:256px;top:3px" width="18" height="16" viewBox="0 0 18 16"><path d="M4.300 4.400H1.800V12.200H4.300M13.300 4.400H15.800V12.200H13.300" stroke="#75beff" stroke-width="1.250" fill="none"/><path d="M8.800 5L12 6.700V10L8.800 11.700L5.600 10V6.700zM5.600 6.700L8.800 8.400L12 6.700M8.800 8.400V11.700" stroke="#75beff" stroke-width="1.100" fill="none" stroke-linejoin="round"/></svg>
<span style="left:276px">listaProductoActivoAdmin</span>
<svg class="abs" style="left:424px;top:3px" width="16" height="16" viewBox="0 0 16 16"><path d="M6 3.5 L10.5 8 L6 12.5" fill="none" stroke="#a9a9a9" stroke-width="1.15"/></svg>
<svg class="abs" style="left:439.5px;top:3px" width="18" height="16" viewBox="0 0 18 16"><path d="M4.300 4.400H1.800V12.200H4.300M13.300 4.400H15.800V12.200H13.300" stroke="#75beff" stroke-width="1.250" fill="none"/><path d="M8.800 5L12 6.700V10L8.800 11.700L5.600 10V6.700zM5.600 6.700L8.800 8.400L12 6.700M8.800 8.400V11.700" stroke="#75beff" stroke-width="1.100" fill="none" stroke-linejoin="round"/></svg>
</div>
<div class="code" style="left:-1px">
<div class="ig" style="left:68px;top:285px;height:300px"></div>
<div class="ig" style="left:99px;top:323px;height:114px"></div>
<div class="ig" style="left:130px;top:342px;height:57px"></div>
<div class="ln" style="top:0px">1</div>
<div class="cl" style="top:0px"><span class="ck">const</span> <span class="cc">slugify</span> = <span class="cf">require</span><span class="c1">(</span><span class="cs">'slugify'</span><span class="c1">)</span>;</div>
<div class="ln" style="top:19px">2</div>
<div class="cl" style="top:19px"><span class="ck">const</span> <span class="c1">{</span> <span class="cc">Op</span> <span class="c1">}</span> = <span class="cf">require</span><span class="c1">(</span><span class="cs">'sequelize'</span><span class="c1">)</span>;</div>
<div class="ln" style="top:38px">3</div>
<div class="cl" style="top:38px"><span class="ck">const</span> <span class="cc">path</span> = <span class="cf">require</span><span class="c1">(</span><span class="cs">'path'</span><span class="c1">)</span>;</div>
<div class="ln" style="top:57px">4</div>
<div class="cl" style="top:57px"><span class="ck">const</span> <span class="cc">fs</span> = <span class="cf">require</span><span class="c1">(</span><span class="cs">'fs'</span><span class="c1">)</span>;</div>
<div class="ln" style="top:76px">5</div>
<div class="cl" style="top:76px"></div>
<div class="ln" style="top:95px">6</div>
<div class="cl" style="top:95px"><span class="ck">const</span> <span class="ct">Categoria</span> = <span class="cf">require</span><span class="c1">(</span><span class="cs">'../models/Categoria.js'</span><span class="c1">)</span>;</div>
<div class="ln" style="top:114px">7</div>
<div class="cl" style="top:114px"><span class="ck">const</span> <span class="ct">Producto</span> = <span class="cf">require</span><span class="c1">(</span><span class="cs">'../models/Producto.js'</span><span class="c1">)</span></div>
<div class="ln" style="top:133px">8</div>
<div class="cl" style="top:133px"><span class="ck">const</span> <span class="ct">SubCategoria</span> = <span class="cf">require</span><span class="c1">(</span><span class="cs">'../models/SubCategoria.js'</span><span class="c1">)</span>;</div>
<div class="ln" style="top:152px">9</div>
<div class="cl" style="top:152px"><span class="ck">const</span> <span class="ct">Galeria</span> = <span class="cf">require</span><span class="c1">(</span><span class="cs">'../models/Galeria.js'</span><span class="c1">)</span>;</div>
<div class="ln" style="top:171px">10</div>
<div class="cl" style="top:171px"><span class="ck">const</span> <span class="ct">Variedad</span> = <span class="cf">require</span><span class="c1">(</span><span class="cs">'../models/Variedad.js'</span><span class="c1">)</span>;</div>
<div class="ln" style="top:190px">11</div>
<div class="cl" style="top:190px"></div>
<div class="ln" style="top:209px">12</div>
<div class="cl fold" style="top:209px"><span class="ck">const</span> <span class="cf">registro_producto</span> = <span class="ck">async</span> <span class="c1">(</span><span class="cv">req</span>, <span class="cv">res</span><span class="c1">)</span> <span class="ck">=&gt;</span> <span class="c1">{</span></div>
<div class="ln" style="top:228px">44</div>
<div class="cl" style="top:228px"><span class="c1">}</span></div>
<div class="ln" style="top:247px">45</div>
<div class="cl" style="top:247px"></div>
<div class="ln" style="top:266px">46</div>
<div class="cl" style="top:266px"><span class="ck">const</span> <span class="cf">getProductoAdmin</span> = <span class="ck">async</span> <span class="c1">(</span><span class="cv">req</span>, <span class="cv">res</span><span class="c1">)</span> <span class="ck">=&gt;</span> <span class="c1">{</span></div>
<div class="ln" style="top:285px">47</div>
<div class="cl" style="top:285px"></div>
<div class="ln" style="top:304px">48</div>
<div class="cl" style="top:304px">    <span class="cp">if</span> <span class="c2">(</span>!<span class="cv">req</span>.<span class="cv">usuario</span><span class="c2">)</span> <span class="c2">{</span></div>
<div class="ln" style="top:323px">49</div>
<div class="cl" style="top:323px">        <span class="cv">res</span>.<span class="cf">status</span><span class="c3">(</span><span class="cn">500</span><span class="c3">)</span>.<span class="cf">json</span><span class="c3">(</span><span class="c1">{</span></div>
<div class="ln" style="top:342px">50</div>
<div class="cl" style="top:342px">            <span class="cv">data</span>: <span class="ck">undefined</span>,</div>
<div class="ln" style="top:361px">51</div>
<div class="cl" style="top:361px">            <span class="cv">msg</span>: <span class="cs">'Error Token'</span>,</div>
<div class="ln" style="top:380px">52</div>
<div class="cl" style="top:380px">            <span class="cv">dd</span>: <span class="cv">req</span>.<span class="cv">usuario</span></div>
<div class="ln" style="top:399px">53</div>
<div class="cl" style="top:399px">        <span class="c1">}</span><span class="c3">)</span>;</div>
<div class="ln" style="top:418px">54</div>
<div class="cl" style="top:418px">        <span class="cp">return</span></div>
<div class="ln" style="top:437px">55</div>
<div class="cl" style="top:437px">    <span class="c2">}</span></div>
<div class="ln" style="top:456px">56</div>
<div class="cl" style="top:456px"></div>
<div class="ln" style="top:475px">57</div>
<div class="cl" style="top:475px">    <span class="ck">let</span> <span class="cv">filtro</span> = <span class="cv">req</span>.<span class="cv">params</span><span class="c2">[</span><span class="cs">'filtro'</span><span class="c2">]</span>;</div>
<div class="ln" style="top:494px">58</div>
<div class="cl" style="top:494px">    <span class="ck">let</span> <span class="cv">whereCondition</span> = <span class="c2">{}</span>;</div>
<div class="ln" style="top:513px">59</div>
<div class="cl" style="top:513px"></div>
<div class="ln" style="top:532px">60</div>
<div class="cl" style="top:532px">    <span class="cp">if</span> <span class="c2">(</span><span class="cv">filtro</span><span class="c2">)</span> <span class="c2">{</span></div>
<svg class="abs" style="left:49px;top:210.5px" width="16" height="16" viewBox="0 0 16 16"><path d="M6 3.5 L10.5 8 L6 12.5" fill="none" stroke="#c5c5c5" stroke-width="1.15"/></svg>
<div class="abs" style="left:433.8px;top:218px;width:2.2px;height:2.2px;background:#7f7f7f"></div>
<div class="abs" style="left:438.1px;top:218px;width:2.2px;height:2.2px;background:#7f7f7f"></div>
<div class="abs" style="left:442.4px;top:218px;width:2.2px;height:2.2px;background:#7f7f7f"></div>
<div class="abs" style="left:192px;top:16px;width:1.500px;height:1.400px;background:#999999"></div>
<div class="abs" style="left:195px;top:16px;width:1.500px;height:1.400px;background:#999999"></div>
<div class="abs" style="left:198px;top:16px;width:1.500px;height:1.400px;background:#999999"></div>
</div>
</div>
</body></html>
